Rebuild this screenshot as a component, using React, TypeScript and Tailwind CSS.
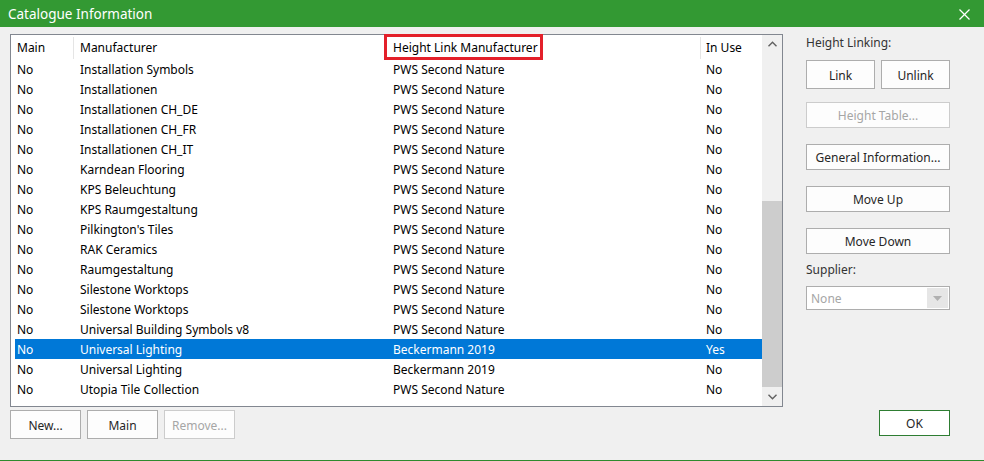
type Row = { main: string; manufacturer: string; link: string; inUse: string; selected?: boolean }

const rows: Row[] = [
  { main: "No", manufacturer: "Installation Symbols", link: "PWS Second Nature", inUse: "No" },
  { main: "No", manufacturer: "Installationen", link: "PWS Second Nature", inUse: "No" },
  { main: "No", manufacturer: "Installationen CH_DE", link: "PWS Second Nature", inUse: "No" },
  { main: "No", manufacturer: "Installationen CH_FR", link: "PWS Second Nature", inUse: "No" },
  { main: "No", manufacturer: "Installationen CH_IT", link: "PWS Second Nature", inUse: "No" },
  { main: "No", manufacturer: "Karndean Flooring", link: "PWS Second Nature", inUse: "No" },
  { main: "No", manufacturer: "KPS Beleuchtung", link: "PWS Second Nature", inUse: "No" },
  { main: "No", manufacturer: "KPS Raumgestaltung", link: "PWS Second Nature", inUse: "No" },
  { main: "No", manufacturer: "Pilkington's Tiles", link: "PWS Second Nature", inUse: "No" },
  { main: "No", manufacturer: "RAK Ceramics", link: "PWS Second Nature", inUse: "No" },
  { main: "No", manufacturer: "Raumgestaltung", link: "PWS Second Nature", inUse: "No" },
  { main: "No", manufacturer: "Silestone Worktops", link: "PWS Second Nature", inUse: "No" },
  { main: "No", manufacturer: "Silestone Worktops", link: "PWS Second Nature", inUse: "No" },
  { main: "No", manufacturer: "Universal Building Symbols v8", link: "PWS Second Nature", inUse: "No" },
  { main: "No", manufacturer: "Universal Lighting", link: "Beckermann 2019", inUse: "Yes", selected: true },
  { main: "No", manufacturer: "Universal Lighting", link: "Beckermann 2019", inUse: "No" },
  { main: "No", manufacturer: "Utopia Tile Collection", link: "PWS Second Nature", inUse: "No" },
]

function Btn({ label, disabled, className = "" }: { label: string; disabled?: boolean; className?: string }) {
  return (
    <div
      className={`flex items-center justify-center border bg-[#fdfdfd] pt-[2px] text-[12px] ${
        disabled ? "border-[#cccccc] text-[#a6a6a6]" : "border-[#adadad] text-[#262626]"
      } ${className}`}
    >
      {label}
    </div>
  )
}

export default function App() {
  return (
    <div
      className="flex h-[461px] w-[984px] flex-col border-b border-[#2e8b2e] bg-[#f0f0f0] text-black"
      style={{ fontFamily: '"Noto Sans", "Segoe UI", sans-serif' }}
    >
      {/* Title bar */}
      <div className="flex h-[27px] items-center justify-between bg-[#339933] pl-[8px] pr-[14px] text-white">
        <span className="pt-px text-[13.5px]">Catalogue Information</span>
        <svg width="11" height="11" viewBox="0 0 11 11" stroke="white" strokeWidth="1.2" className="mt-px">
          <line x1="0.5" y1="0.5" x2="10.5" y2="10.5" />
          <line x1="10.5" y1="0.5" x2="0.5" y2="10.5" />
        </svg>
      </div>

      <div className="flex flex-1 pt-[7px]">
        {/* Left: list + buttons */}
        <div className="ml-[10px] flex w-[773px] flex-col">
          <div className="relative flex h-[373px] border border-[#828790] bg-white">
            <div className="flex-1 text-[12px]">
              {/* Header */}
              <div className="flex h-[24px] items-center pl-[4px] pt-[2px]">
                <div className="w-[58px] pl-[2px]">Main</div>
                <div className="flex h-full w-[313px] items-center border-l border-[#e5e5e5] pl-[6px]">Manufacturer</div>
                <div className="flex h-full w-[314px] items-center border-l border-[#e5e5e5] pl-[6px]">
                  Height Link Manufacturer
                </div>
                <div className="flex h-full flex-1 items-center border-l border-[#e5e5e5] pl-[5px]">In Use</div>
              </div>
              {/* Rows */}
              {rows.map((r, i) => (
                <div
                  key={i}
                  className={`ml-[4px] flex h-[20px] items-center pt-[2px] ${r.selected ? "bg-[#0078d7] text-white" : ""}`}
                >
                  <div className="w-[58px] pl-[2px]">{r.main}</div>
                  <div className="w-[313px] pl-[7px]">{r.manufacturer}</div>
                  <div className="w-[314px] pl-[7px]">{r.link}</div>
                  <div className="flex-1 pl-[6px]">{r.inUse}</div>
                </div>
              ))}
            </div>

            {/* Scrollbar */}
            <div className="flex w-[20px] flex-col bg-[#f0f0f0]">
              <div className="flex h-[17px] items-center justify-center">
                <svg width="9" height="6" viewBox="0 0 9 6" fill="none" stroke="#606060" strokeWidth="1.4">
                  <polyline points="0.5,5.2 4.5,1.2 8.5,5.2" />
                </svg>
              </div>
              <div className="flex-1" />
              <div className="h-[186px] bg-[#cdcdcd]" />
              <div className="flex h-[19px] items-center justify-center">
                <svg width="9" height="6" viewBox="0 0 9 6" fill="none" stroke="#606060" strokeWidth="1.4">
                  <polyline points="0.5,0.8 4.5,4.8 8.5,0.8" />
                </svg>
              </div>
            </div>

            {/* Highlight box */}
            <div className="absolute left-[373px] top-[-1px] h-[26px] w-[159px] border-[3px] border-[#e3202a]" />
          </div>

          <div className="mt-[3px] flex gap-[6px]">
            <Btn label="New..." className="h-[29px] w-[71px]" />
            <Btn label="Main" className="h-[29px] w-[71px]" />
            <Btn label="Remove..." disabled className="h-[29px] w-[71px]" />
          </div>
        </div>

        {/* Right panel */}
        <div className="ml-[23px] flex w-[144px] flex-col text-[12px]">
          <div className="mt-[1px] h-[16px] leading-[16px] text-[#333333]">Height Linking:</div>
          <div className="mt-[9px] flex justify-between">
            <Btn label="Link" className="h-[29px] w-[69px]" />
            <Btn label="Unlink" className="h-[29px] w-[69px]" />
          </div>
          <Btn label="Height Table..." disabled className="mt-[13px] h-[26px]" />
          <Btn label="General Information..." className="mt-[16px] h-[26px]" />
          <Btn label="Move Up" className="mt-[16px] h-[26px]" />
          <Btn label="Move Down" className="mt-[16px] h-[26px]" />
          <div className="mt-[8px] h-[16px] leading-[16px] text-[#333333]">Supplier:</div>
          <div className="mt-[8px] flex h-[24px] items-stretch border border-[#adadad] bg-white p-[1px]">
            <div className="flex flex-1 items-center pl-[3px] pt-px text-[#a6a6a6]">None</div>
            <div className="flex w-[21px] items-center justify-center bg-[#e6e6e6]">
              <svg width="9" height="5" viewBox="0 0 9 5">
                <polygon points="0,0 9,0 4.5,5" fill="#b0b0b0" />
              </svg>
            </div>
          </div>
          <div className="mt-[100px] flex h-[26px] w-[71px] items-center justify-center self-end border border-[#2e7d32] bg-white pt-px text-[12px] text-[#262626]">
            OK
          </div>
        </div>
      </div>
    </div>
  )
}
